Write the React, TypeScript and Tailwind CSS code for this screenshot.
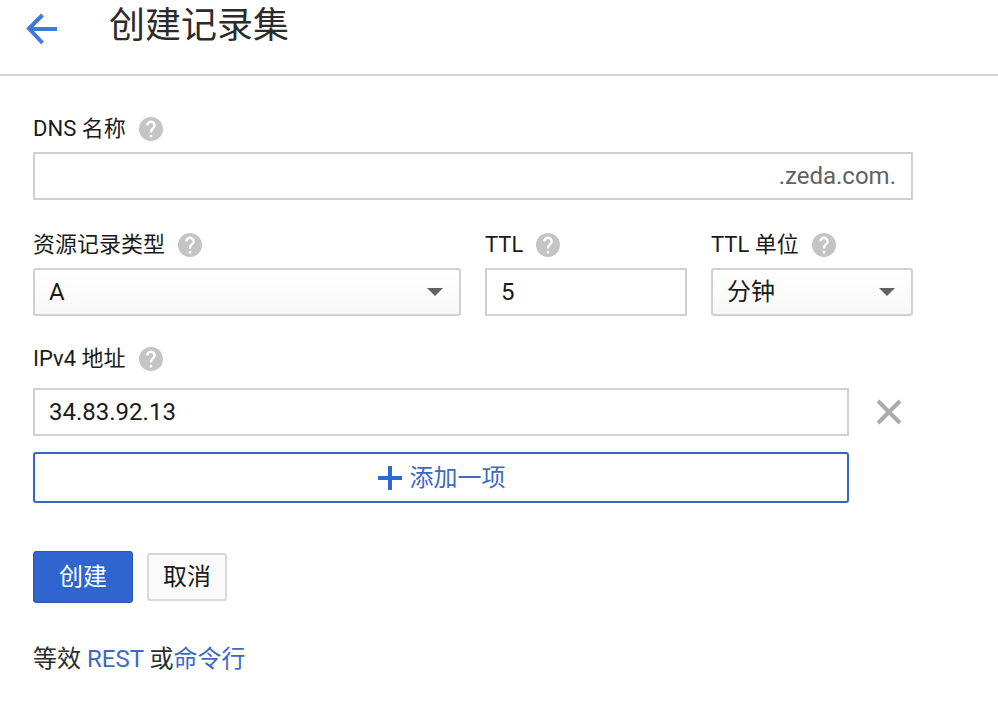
const font = { fontFamily: '"Roboto","Noto Sans CJK SC",sans-serif' };

function Help() {
  return (
    <svg width="24" height="24" viewBox="2 2 20 20" className="ml-[13px] shrink-0">
      <path
        fill="#c4c4c4"
        d="M12 2C6.48 2 2 6.48 2 12s4.48 10 10 10 10-4.48 10-10S17.52 2 12 2zm1 17h-2v-2h2v2zm2.07-7.75l-.9.92C13.45 12.9 13 13.5 13 15h-2v-.5c0-1.1.45-2.1 1.17-2.83l1.24-1.26c.37-.36.59-.86.59-1.41 0-1.1-.9-2-2-2s-2 .9-2 2H8c0-2.21 1.79-4 4-4s4 1.79 4 4c0 .88-.36 1.68-.93 2.25z"
      />
    </svg>
  );
}

function Label({ text }: { text: string }) {
  return (
    <div className="flex h-[24px] items-center text-[22px] leading-[24px] text-[#1a1a1a]">
      <span>{text}</span>
      <Help />
    </div>
  );
}

function Caret() {
  return (
    <svg width="16" height="8" viewBox="0 0 16 8" className="shrink-0">
      <path d="M0 0H16L8 8Z" fill="#616161" />
    </svg>
  );
}

function SelectBox({ value }: { value: string }) {
  return (
    <div className="flex h-[48px] items-center justify-between rounded-[3px] border-2 border-[#d0d0d0] bg-gradient-to-b from-white to-[#f8f8f8] pl-[14px] pr-[16px] text-[24px] text-[#1a1a1a]">
      <span>{value}</span>
      <Caret />
    </div>
  );
}

function InputBox({ children, className }: { children?: React.ReactNode; className?: string }) {
  return (
    <div className={`flex h-[48px] shrink-0 items-center border-2 border-[#d0d0d0] bg-white px-[14px] text-[24px] text-[#1a1a1a] ${className ?? ""}`}>
      {children}
    </div>
  );
}

export default function App() {
  return (
    <div className="h-[701px] w-[998px] overflow-hidden bg-white" style={font}>
      <header className="flex h-[76px] items-start border-b-2 border-[#d4d4d4] pl-[25px]">
        <svg width="34" height="32" viewBox="0 0 34 32" className="mt-[13px] shrink-0">
          <path d="M32 16H4M17.5 2L4 15.5L17.5 30" fill="none" stroke="#4079dc" strokeWidth="4" />
        </svg>
        <h1 className="ml-[50px] mt-[4px] text-[36px] font-normal leading-[44px] text-[#2b2b2b]">创建记录集</h1>
      </header>

      <main className="w-[880px] pl-[33px] pt-[41px]">
        <Label text="DNS 名称" />
        <InputBox className="mt-[11px] w-[880px] justify-end text-[#616161]">
          <span className="pr-[1px]">.zeda.com.</span>
        </InputBox>

        <div className="mt-[33px] grid w-[880px] grid-cols-[428px_202px_202px] gap-x-[24px]">
          <div>
            <Label text="资源记录类型" />
            <div className="mt-[11px]"><SelectBox value="A" /></div>
          </div>
          <div>
            <Label text="TTL" />
            <InputBox className="mt-[11px]">5</InputBox>
          </div>
          <div>
            <Label text="TTL 单位" />
            <div className="mt-[11px]"><SelectBox value="分钟" /></div>
          </div>
        </div>

        <div className="mt-[31px]"><Label text="IPv4 地址" /></div>
        <div className="mt-[17px] flex items-center">
          <InputBox className="w-[816px]">34.83.92.13</InputBox>
          <svg width="26" height="26" viewBox="0 0 26 26" className="ml-[27px] shrink-0">
            <path d="M2 2L24 24M24 2L2 24" stroke="#ababab" strokeWidth="4" />
          </svg>
        </div>

        <div className="mt-[16px] flex h-[51px] w-[816px] items-center justify-center rounded-[3px] border-2 border-[#3367c4] pl-[1px] text-[24px] text-[#3f69c0]">
          <svg width="24" height="24" viewBox="0 0 24 24" className="mr-[8px] shrink-0">
            <path d="M12 0V24M0 12H24" stroke="#3367d0" strokeWidth="4" />
          </svg>
          <span>添加一项</span>
        </div>

        <div className="mt-[48px] flex items-center">
          <div className="flex h-[52px] w-[100px] items-center justify-center rounded-[3px] border border-[#2a58b0] bg-[#3065d0] text-[24px] text-white">创建</div>
          <div className="ml-[14px] flex h-[48px] w-[80px] items-center justify-center rounded-[3px] border-2 border-[#d8d8d8] bg-[#fafafa] text-[24px] text-[#1a1a1a]">取消</div>
        </div>

        <p className="mt-[41px] text-[24px] leading-[30px] text-[#2b2b2b]">
          等效 <span className="text-[#3f69c0]">REST</span> 或<span className="text-[#3f69c0]">命令行</span>
        </p>
      </main>
    </div>
  );
}
